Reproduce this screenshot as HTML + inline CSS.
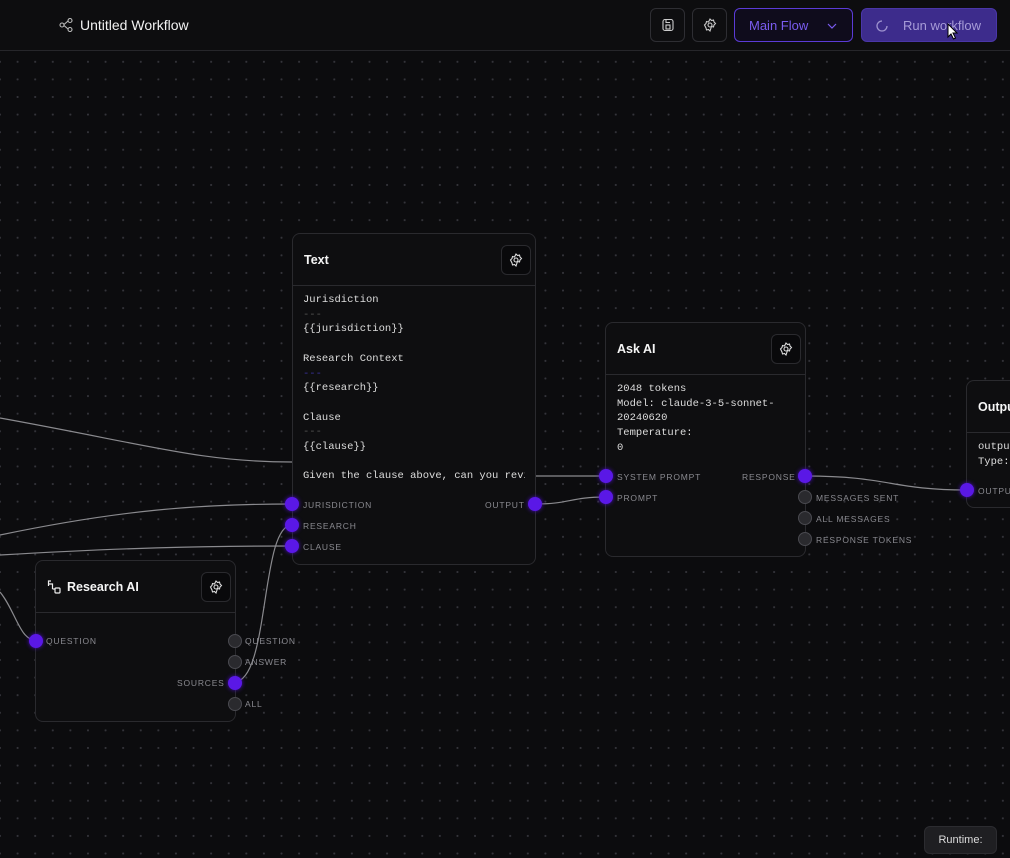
<!DOCTYPE html>
<html><head><meta charset="utf-8"><style>
*{box-sizing:border-box;margin:0;padding:0}
body{width:1010px;height:858px;overflow:hidden;background:#0c0c0e;font-family:"Liberation Sans",sans-serif;color:#eee;position:relative}
.grid{position:absolute;left:0;top:51px;width:1010px;height:807px;background-image:radial-gradient(circle,#34343a 0.9px,transparent 1.2px);background-size:17.6px 17.6px;background-position:-8.8px 2px}
.hdr{position:absolute;left:0;top:0;width:1010px;height:51px;background:#0d0d0f;border-bottom:1px solid #26262a}
.title{position:absolute;left:80px;top:17px;font-size:14px;color:#f2f2f2}
.btn{position:absolute;top:8px;height:34px;border:1px solid #2e2e33;border-radius:6px;background:#0e0e10}
.node{position:absolute;background:#0e0e10;border:1px solid #2a2a2e;border-radius:8px}
.nh{height:52px;border-bottom:1px solid #2a2a2e;position:relative}
.nh b{position:absolute;left:11px;top:19px;font-size:12.5px;color:#f5f5f5}
.gear{position:absolute;right:4px;top:11px;width:30px;height:30px;border:1px solid #2a2a2e;border-radius:6px;background:#09090b;display:flex;align-items:center;justify-content:center}
.mono{font-family:"Liberation Mono",monospace;font-size:10.5px;color:#ddd;line-height:14.7px;white-space:pre;position:absolute;overflow:hidden}
.lbl{position:absolute;font-size:8.5px;letter-spacing:0.8px;color:#8a8a90}
.p{position:absolute;width:14px;height:14px;border-radius:50%;background:#5a18e6;box-shadow:0 0 4px #4a10c0}
.g{position:absolute;width:14px;height:14px;border-radius:50%;background:#2a2a2e;border:1.5px solid #4a4a50}
</style></head><body>
<div class="grid"></div>
<svg style="position:absolute;left:0;top:0" width="1010" height="858" fill="none" stroke="#8a8a8e" stroke-width="1.2">
<path d="M0 418 C150 445,200 462,292 462"/>
<path d="M0 535 C120 510,200 504,292 504"/>
<path d="M0 555 C120 548,200 546,292 546"/>
<path d="M0 592 C15 610,20 640,35 640"/>
<path d="M234 682 C270 682,260 525,292 525"/>
<path d="M535 504 C570 504,570 497,606 497"/>
<path d="M520 476 L606 476"/>
<path d="M805 476 C890 476,890 490,967 490"/>
</svg>
<div class="hdr">
<svg style="position:absolute;left:59px;top:18px" width="14" height="14" fill="none" stroke="#bbb" stroke-width="1.1"><circle cx="3" cy="7" r="2"/><circle cx="11" cy="2.5" r="2"/><circle cx="11" cy="11.5" r="2"/><path d="M5 6.5L9 3M5 7.5L9 11"/></svg>
<div class="title">Untitled Workflow</div>
<div class="btn" style="left:650px;width:35px"><svg style="position:absolute;left:10px;top:9px" width="14" height="14" fill="none" stroke="#ccc" stroke-width="1.1"><rect x="2" y="1.5" width="10" height="11" rx="2"/><rect x="5" y="7" width="4" height="4"/><path d="M5 1.5v3h4"/></svg></div>
<div class="btn" style="left:692px;width:35px"><svg style="position:absolute;left:10px;top:9px" width="14" height="14" fill="none" stroke="#ccc" stroke-width="1.1"><circle cx="7" cy="7" r="2"/><path d="M7 1l1.5 1.5 2-.5.5 2 1.5 1.5-1.5 1.5-.5 2-2-.5L7 13l-1.5-1.5-2 .5-.5-2L1.5 7 3 5.5l.5-2 2 .5z"/></svg></div>
<div class="btn" style="left:734px;width:119px;border-color:#5b3bd6;background:#0f0c1c"><span style="position:absolute;left:14px;top:9px;font-size:13px;color:#7a5cf0">Main Flow</span><svg style="position:absolute;left:92px;top:13px" width="10" height="8" fill="none" stroke="#7a5cf0" stroke-width="1.2"><path d="M1 2l4 4 4-4"/></svg></div>
<div class="btn" style="left:861px;width:136px;background:#3d2c8c;border-color:#4a36a8"><svg style="position:absolute;left:13px;top:10px" width="14" height="14" fill="none" stroke="#9e92cf" stroke-width="1.3"><path d="M12 7A5 5 0 1 1 7 2"/></svg><span style="position:absolute;left:41px;top:9px;font-size:13px;color:#a79cd8">Run workflow</span></div>
<svg style="position:absolute;left:947px;top:23px" width="12" height="18"><path d="M1 1v13l3-3 2.5 5 2-1-2.5-5h4z" fill="#fff" stroke="#000" stroke-width="1"/></svg>
</div>

<div class="node" style="left:292px;top:233px;width:244px;height:332px">
<div class="nh"><b>Text</b><div class="gear"><svg width="14" height="14" fill="none" stroke="#ddd" stroke-width="1.1"><circle cx="7" cy="7" r="2"/><path d="M7 1l1.5 1.5 2-.5.5 2 1.5 1.5-1.5 1.5-.5 2-2-.5L7 13l-1.5-1.5-2 .5-.5-2L1.5 7 3 5.5l.5-2 2 .5z"/></svg></div></div>
</div>
<div class="mono" style="left:303px;top:293px;width:222px">Jurisdiction
<span style="color:#555">---</span>
{{jurisdiction}}

Research Context
<span style="color:#3a33a0">---</span>
{{research}}

Clause
<span style="color:#555">---</span>
{{clause}}

Given the clause above, can you review</div>
<div class="p" style="left:285px;top:497px"></div><div class="lbl" style="left:303px;top:500px">JURISDICTION</div>
<div class="p" style="left:285px;top:518px"></div><div class="lbl" style="left:303px;top:521px">RESEARCH</div>
<div class="p" style="left:285px;top:539px"></div><div class="lbl" style="left:303px;top:542px">CLAUSE</div>
<div class="p" style="left:528px;top:497px"></div><div class="lbl" style="left:485px;top:500px">OUTPUT</div>

<div class="node" style="left:605px;top:322px;width:201px;height:235px">
<div class="nh"><b>Ask AI</b><div class="gear"><svg width="14" height="14" fill="none" stroke="#ddd" stroke-width="1.1"><circle cx="7" cy="7" r="2"/><path d="M7 1l1.5 1.5 2-.5.5 2 1.5 1.5-1.5 1.5-.5 2-2-.5L7 13l-1.5-1.5-2 .5-.5-2L1.5 7 3 5.5l.5-2 2 .5z"/></svg></div></div>
</div>
<div class="mono" style="left:617px;top:382px;width:185px">2048 tokens
Model: claude-3-5-sonnet-
20240620
Temperature:
0</div>
<div class="p" style="left:599px;top:469px"></div><div class="lbl" style="left:617px;top:472px">SYSTEM PROMPT</div>
<div class="p" style="left:599px;top:490px"></div><div class="lbl" style="left:617px;top:493px">PROMPT</div>
<div class="p" style="left:798px;top:469px"></div><div class="lbl" style="left:742px;top:472px">RESPONSE</div>
<div class="g" style="left:798px;top:490px"></div><div class="lbl" style="left:816px;top:493px">MESSAGES SENT</div>
<div class="g" style="left:798px;top:511px"></div><div class="lbl" style="left:816px;top:514px">ALL MESSAGES</div>
<div class="g" style="left:798px;top:532px"></div><div class="lbl" style="left:816px;top:535px">RESPONSE TOKENS</div>

<div class="node" style="left:966px;top:380px;width:60px;height:128px">
<div class="nh"><b>Output</b></div>
</div>
<div class="mono" style="left:978px;top:440px;width:32px">output
Type:</div>
<div class="p" style="left:960px;top:483px"></div><div class="lbl" style="left:978px;top:486px;width:32px;overflow:hidden;white-space:nowrap">OUTPUT</div>

<div class="node" style="left:35px;top:560px;width:201px;height:162px">
<div class="nh"><svg style="position:absolute;left:11px;top:19px" width="15" height="15" fill="none" stroke="#eee" stroke-width="1.2"><path d="M4 1H1.5v5"/><path d="M1.5 4h4v5"/><rect x="8" y="8" width="5" height="5" rx="1"/><path d="M5.5 9h2.5"/></svg><b style="left:31px">Research AI</b><div class="gear"><svg width="14" height="14" fill="none" stroke="#ddd" stroke-width="1.1"><circle cx="7" cy="7" r="2"/><path d="M7 1l1.5 1.5 2-.5.5 2 1.5 1.5-1.5 1.5-.5 2-2-.5L7 13l-1.5-1.5-2 .5-.5-2L1.5 7 3 5.5l.5-2 2 .5z"/></svg></div></div>
</div>
<div class="p" style="left:29px;top:634px"></div><div class="lbl" style="left:46px;top:636px">QUESTION</div>
<div class="g" style="left:228px;top:634px"></div><div class="lbl" style="left:245px;top:636px">QUESTION</div>
<div class="g" style="left:228px;top:655px"></div><div class="lbl" style="left:245px;top:657px">ANSWER</div>
<div class="p" style="left:228px;top:676px"></div><div class="lbl" style="left:177px;top:678px">SOURCES</div>
<div class="g" style="left:228px;top:697px"></div><div class="lbl" style="left:245px;top:699px">ALL</div>

<div style="position:absolute;left:924px;top:826px;width:73px;height:28px;background:#1f1f22;border:1px solid #2c2c30;border-radius:6px;font-size:11px;color:#ddd;text-align:center;line-height:26px">Runtime:</div>
</body></html>
